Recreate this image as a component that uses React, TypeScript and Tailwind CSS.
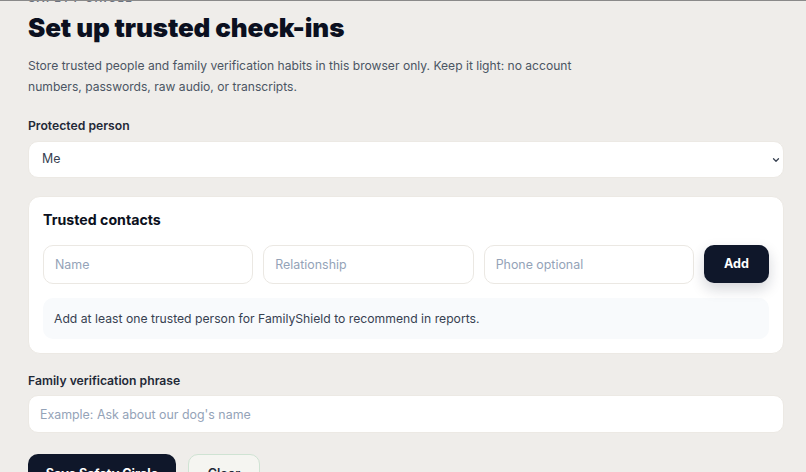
export default function App() {
  return (
    <div
      className="min-h-[472px] w-full overflow-hidden border-t border-[#8a8a8a] bg-[#efedea] text-[#111827]"
      style={{ fontFamily: "Inter, 'Liberation Sans', sans-serif" }}
    >
      <div className="pl-7 pr-[22px]">
        <p className="-mt-[10px] text-[11px] font-semibold uppercase leading-[14px] tracking-[0.14em] text-[#6b7280]">
          Safety Circle
        </p>
        <h1 className="mt-[7px] text-[26px] font-black leading-[32px] tracking-[-0.005em] text-[#0b1020]">
          Set up trusted check-ins
        </h1>
        <p className="mt-[11px] max-w-[570px] text-[12.1px] leading-[21px] text-[#4b5563]">
          Store trusted people and family verification habits in this browser only. Keep it light: no account
          numbers, passwords, raw audio, or transcripts.
        </p>

        <label className="mt-[21px] block text-[12.2px] font-semibold leading-[16px] text-[#1f2937]">
          Protected person
        </label>
        <div className="mt-[7px] flex h-[37px] items-center justify-between rounded-[10px] border border-[#ece9e4] bg-white pl-[13px] pr-[2px] text-[12.4px] text-[#374151]">
          <span>Me</span>
          <svg width="10" height="10" viewBox="0 0 24 24" fill="none" stroke="#374151" strokeWidth="3" strokeLinecap="round" strokeLinejoin="round">
            <path d="M6 9l6 6 6-6" />
          </svg>
        </div>

        <div className="mt-[18px] rounded-[12px] border border-[#ece9e4] bg-white p-[14px] pt-[13px]">
          <h2 className="text-[14.2px] font-bold leading-[20px] text-[#0b1020]">Trusted contacts</h2>
          <div className="mt-[15px] flex gap-[10px]">
            <input
              placeholder="Name"
              className="h-[39px] min-w-0 flex-1 rounded-[10px] border border-[#ebe8e3] bg-white px-[11px] text-[12.4px] text-[#374151] outline-none placeholder:text-[#94a3b8]"
            />
            <input
              placeholder="Relationship"
              className="h-[39px] min-w-0 flex-1 rounded-[10px] border border-[#ebe8e3] bg-white px-[11px] text-[12.4px] text-[#374151] outline-none placeholder:text-[#94a3b8]"
            />
            <input
              placeholder="Phone optional"
              className="h-[39px] min-w-0 flex-1 rounded-[10px] border border-[#ebe8e3] bg-white px-[11px] text-[12.4px] text-[#374151] outline-none placeholder:text-[#94a3b8]"
            />
            <button className="h-[38px] w-[65px] rounded-[10px] bg-[#0f172a] text-[12.6px] font-bold text-white shadow-[0_6px_14px_rgba(15,23,42,0.18)]">
              Add
            </button>
          </div>
          <div className="mt-[14px] rounded-[10px] bg-[#f8fafc] px-[11px] py-[12px] text-[12.2px] leading-[17px] text-[#374151]">
            Add at least one trusted person for FamilyShield to recommend in reports.
          </div>
        </div>

        <label className="mt-[19px] block text-[12.2px] font-semibold leading-[16px] text-[#1f2937]">
          Family verification phrase
        </label>
        <input
          placeholder="Example: Ask about our dog's name"
          className="mt-[6px] block h-[38px] w-full rounded-[10px] border border-[#ece9e4] bg-white px-[11px] text-[12.4px] outline-none placeholder:text-[#94a3b8]"
        />

        <div className="mt-[21px] flex gap-[12px]">
          <button className="h-[40px] w-[148px] rounded-[10px] bg-[#0f172a] text-[12.6px] font-bold text-white">
            Save Safety Circle
          </button>
          <button className="h-[40px] w-[72px] rounded-[10px] border border-[#cfe3d3] bg-[#f5f5f1] text-[12.6px] font-semibold text-[#1f2937]">
            Clear
          </button>
        </div>
      </div>
    </div>
  )
}
